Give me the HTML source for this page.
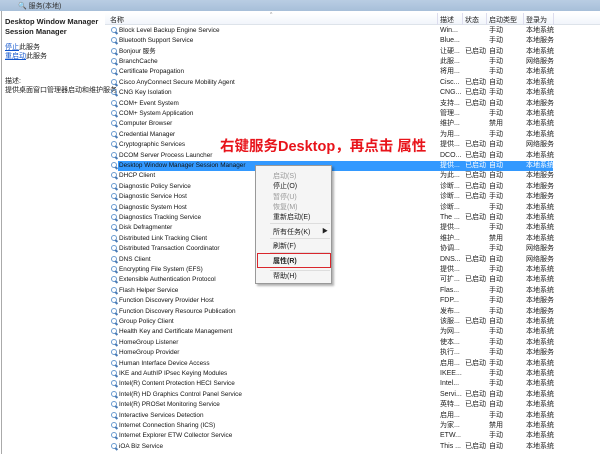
<!DOCTYPE html>
<html><head><meta charset="utf-8"><style>
*{margin:0;padding:0;box-sizing:border-box}
body{width:600px;height:454px;overflow:hidden;background:#fff;position:relative;font-family:"Liberation Sans","Noto Sans CJK SC",sans-serif;font-size:7px;color:#222}
.a{position:absolute;white-space:nowrap}
#title{left:0;top:0;width:600px;height:11px;background:linear-gradient(#b9cde3,#a7bfd9);}
#title span{position:absolute;left:18px;top:1px;color:#333;font-size:7px}
#hdr{left:105px;top:13px;width:495px;height:12px;background:linear-gradient(#fff,#f1f5fb);border-bottom:1px solid #dde3ea}
.row{position:absolute;left:0;width:600px;height:10.4px;line-height:10.4px}
.row .ic{position:absolute;left:111px;top:1px;width:6px;height:6px;border:1.3px solid #6a9bd0;border-radius:50%;line-height:0;font-size:0}
.row .ic:after{content:"";position:absolute;left:3px;top:4px;width:3px;height:1.5px;background:#4a7bb5;transform:rotate(45deg)}
.row span{position:absolute;top:0}
.row .n{font-size:6.4px;color:#111}
.sel{background:#3399ff;left:118px;top:0;width:435px;height:10.4px;position:absolute}
.selr span{color:#fff}
#menu{left:255px;top:165px;width:77px;height:119px;background:#f5f5f5;border:1px solid #999;box-shadow:2px 2px 2px rgba(0,0,0,.3)}
.mi{position:absolute;left:17px;font-size:7px}
.g{color:#999}
.sep{position:absolute;left:14px;width:60px;height:1px;background:#ddd}
</style></head><body>
<div class="a" id="title"><span>🔍 服务(本地)</span></div>
<div class="a" style="left:1px;top:11px;width:1px;height:443px;background:#aaa"></div>
<div class="a" style="left:5px;top:17px;font-weight:bold;font-size:7.5px;line-height:10px">Desktop Window Manager<br>Session Manager</div>
<div class="a" style="left:5px;top:43px;line-height:9px"><u style="color:#15c">停止</u>此服务<br><u style="color:#15c">重启动</u>此服务</div>
<div class="a" style="left:5px;top:77px;line-height:9px">描述:<br>提供桌面窗口管理器启动和维护服务</div>
<div class="a" id="hdr"></div>
<div class="a" style="left:110px;top:15px">名称</div>
<div class="a" style="left:270px;top:12px;font-size:5px;color:#888">^</div>
<div class="a" style="left:440px;top:15px">描述</div>
<div class="a" style="left:465px;top:15px">状态</div>
<div class="a" style="left:489px;top:15px">启动类型</div>
<div class="a" style="left:526px;top:15px">登录为</div>
<div class="a" style="left:437px;top:13px;width:1px;height:12px;background:#dde"></div>
<div class="a" style="left:462px;top:13px;width:1px;height:12px;background:#dde"></div>
<div class="a" style="left:486px;top:13px;width:1px;height:12px;background:#dde"></div>
<div class="a" style="left:523px;top:13px;width:1px;height:12px;background:#dde"></div>
<div class="a" style="left:553px;top:13px;width:1px;height:12px;background:#dde"></div>
<div id="rows"></div>
<div class="a" style="left:220px;top:135px;color:#e8141b;font-weight:bold;font-size:14.5px">右键服务Desktop，再点击 属性</div>
<div class="a" id="menu">
<div class="mi g" style="top:5px">启动(S)</div>
<div class="mi" style="top:15px">停止(O)</div>
<div class="mi g" style="top:26px">暂停(U)</div>
<div class="mi g" style="top:36px">恢复(M)</div>
<div class="mi" style="top:46px">重新启动(E)</div>
<div class="sep" style="top:57px"></div>
<div class="mi" style="top:61px">所有任务(K)</div>
<div class="mi" style="top:60px;left:66px;font-size:6px">▶</div>
<div class="sep" style="top:72px"></div>
<div class="mi" style="top:75px">刷新(F)</div>
<div class="sep" style="top:86px"></div>
<div class="a" style="left:1px;top:87px;width:74px;height:15px;border:1.5px solid #d9262c"></div>
<div class="mi" style="top:90px;font-weight:bold">属性(R)</div>
<div class="sep" style="top:104px"></div>
<div class="mi" style="top:105px">帮助(H)</div>
</div>
<script>
var d=[["Block Level Backup Engine Service","Win...","","手动","本地系统"],
["Bluetooth Support Service","Blue...","","手动","本地服务"],
["Bonjour 服务","让硬...","已启动","自动","本地系统"],
["BranchCache","此服...","","手动","网络服务"],
["Certificate Propagation","将用...","","手动","本地系统"],
["Cisco AnyConnect Secure Mobility Agent","Cisc...","已启动","自动","本地系统"],
["CNG Key Isolation","CNG...","已启动","手动","本地系统"],
["COM+ Event System","支持...","已启动","自动","本地服务"],
["COM+ System Application","管理...","","手动","本地系统"],
["Computer Browser","维护...","","禁用","本地系统"],
["Credential Manager","为用...","","手动","本地系统"],
["Cryptographic Services","提供...","已启动","自动","网络服务"],
["DCOM Server Process Launcher","DCO...","已启动","自动","本地系统"],
["Desktop Window Manager Session Manager","提供...","已启动","自动","本地系统"],
["DHCP Client","为此...","已启动","自动","本地服务"],
["Diagnostic Policy Service","诊断...","已启动","自动","本地服务"],
["Diagnostic Service Host","诊断...","已启动","手动","本地服务"],
["Diagnostic System Host","诊断...","","手动","本地系统"],
["Diagnostics Tracking Service","The ...","已启动","自动","本地系统"],
["Disk Defragmenter","提供...","","手动","本地系统"],
["Distributed Link Tracking Client","维护...","","禁用","本地系统"],
["Distributed Transaction Coordinator","协调...","","手动","网络服务"],
["DNS Client","DNS...","已启动","自动","网络服务"],
["Encrypting File System (EFS)","提供...","","手动","本地系统"],
["Extensible Authentication Protocol","可扩...","已启动","自动","本地系统"],
["Flash Helper Service","Flas...","","手动","本地系统"],
["Function Discovery Provider Host","FDP...","","手动","本地服务"],
["Function Discovery Resource Publication","发布...","","手动","本地服务"],
["Group Policy Client","该服...","已启动","自动","本地系统"],
["Health Key and Certificate Management","为网...","","手动","本地系统"],
["HomeGroup Listener","使本...","","手动","本地系统"],
["HomeGroup Provider","执行...","","手动","本地服务"],
["Human Interface Device Access","启用...","已启动","手动","本地系统"],
["IKE and AuthIP IPsec Keying Modules","IKEE...","","手动","本地系统"],
["Intel(R) Content Protection HECI Service","Intel...","","手动","本地系统"],
["Intel(R) HD Graphics Control Panel Service","Servi...","已启动","自动","本地系统"],
["Intel(R) PROSet Monitoring Service","英特...","已启动","自动","本地系统"],
["Interactive Services Detection","启用...","","手动","本地系统"],
["Internet Connection Sharing (ICS)","为家...","","禁用","本地系统"],
["Internet Explorer ETW Collector Service","ETW...","","手动","本地系统"],
["iOA Biz Service","This ...","已启动","自动","本地系统"]];
var h="";d.forEach(function(r,i){var t=25.8+i*10.4;var s=i==13;
h+='<div class="row'+(s?' selr':'')+'" style="top:'+t+'px">'+(s?'<div class="sel"></div>':'')+'<div class="ic"></div><span class="n" style="left:119px">'+r[0]+'</span><span style="left:440px">'+r[1]+'</span><span style="left:465px">'+r[2]+'</span><span style="left:489px">'+r[3]+'</span><span style="left:526px">'+r[4]+'</span></div>';});
document.getElementById("rows").innerHTML=h;
</script>
</body></html>
